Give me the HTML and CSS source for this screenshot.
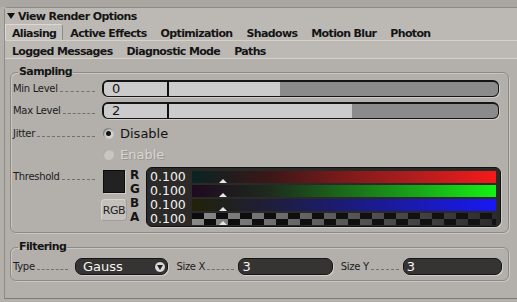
FILE: index.html
```html
<!DOCTYPE html>
<html lang="en">

<head>
    <meta charset="UTF-8">
    <title>View Render Options</title>
    <link rel="stylesheet" href="styles.css">
</head>

<body>
    <div class="top"></div>
    <div class="window">
        <div class="header">
            <svg class="arrow" width="8" height="6" viewBox="0 0 8 6"><path d="M0 0h8L4 6z" fill="#111"/></svg>
            <span>View Render Options</span>
        </div>
        <div class="tabs first">
            <span class="tab active">Aliasing</span>
            <span class="tab">Active Effects</span>
            <span class="tab">Optimization</span>
            <span class="tab">Shadows</span>
            <span class="tab">Motion Blur</span>
            <span class="tab">Photon</span>
        </div>
        <div class="tabs second">
            <span class="tab">Logged Messages</span>
            <span class="tab">Diagnostic Mode</span>
            <span class="tab">Paths</span>
        </div>

        <fieldset class="group sampling">
            <legend>Sampling</legend>
            <div class="row slider-row">
                <div class="lbl"><span>Min Level</span><i class="leader"></i></div>
                <div class="slider">
                    <div class="fill" style="width: 44.7%"></div>
                    <span class="val">0</span>
                    <b class="mark"></b>
                </div>
            </div>
            <div class="row slider-row">
                <div class="lbl"><span>Max Level</span><i class="leader"></i></div>
                <div class="slider">
                    <div class="fill" style="width: 63%"></div>
                    <span class="val">2</span>
                    <b class="mark"></b>
                </div>
            </div>
            <div class="row radio-row">
                <div class="lbl"><span>Jitter</span><i class="leader"></i></div>
                <label class="radio on"><i class="dot"></i>Disable</label>
            </div>
            <div class="row radio-row">
                <div class="lbl"></div>
                <label class="radio off"><i class="dot"></i>Enable</label>
            </div>
            <div class="row thresh-row">
                <div class="lbl"><span>Threshold</span><i class="leader"></i></div>
                <div class="thresh">
                    <div class="swatch-col">
                        <div class="swatch"></div>
                        <button class="rgb-btn">RGB</button>
                    </div>
                    <div class="letters">
                        <span>R</span><span>G</span><span>B</span><span>A</span>
                    </div>
                    <div class="color-panel">
                        <div class="chan"><span class="num">0.100</span><div class="bar red"><i class="tri"></i></div></div>
                        <div class="chan"><span class="num">0.100</span><div class="bar green"><i class="tri"></i></div></div>
                        <div class="chan"><span class="num">0.100</span><div class="bar blue"><i class="tri"></i></div></div>
                        <div class="chan"><span class="num">0.100</span><div class="bar checker"><i class="tri"></i></div></div>
                    </div>
                </div>
            </div>
        </fieldset>

        <fieldset class="group filtering">
            <legend>Filtering</legend>
            <div class="filter-row">
                <div class="lbl type-lbl"><span>Type</span><i class="leader"></i></div>
                <div class="dropdown">
                    <span>Gauss</span>
                    <svg width="12" height="12" viewBox="0 0 12 12"><circle cx="6" cy="6" r="5.5" fill="#d9d9d9" stroke="#222"/><path d="M3 4h6L6 9z" fill="#222"/></svg>
                </div>
                <div class="lbl size-lbl"><span>Size X</span><i class="leader"></i></div>
                <div class="field sx">3</div>
                <div class="lbl size-lbl"><span>Size Y</span><i class="leader"></i></div>
                <div class="field sy">3</div>
            </div>
        </fieldset>
    </div>
</body>

</html>
```

FILE: styles.css
```css
* {
    box-sizing: border-box;
}

body {
    margin: 0;
    width: 517px;
    height: 302px;
    overflow: hidden;
    background: #b3afab;
    font-family: "DejaVu Sans", sans-serif;
    color: #141414;
}

.top {
    height: 7px;
    background: #aaa6a2;
}

.window {
    margin-left: 4px;
    height: 292px;
    border-top: 1px solid #8e8a86;
    border-left: 1px solid #8e8a86;
    border-bottom: 1px solid #7c7874;
    border-top-left-radius: 4px;
    background: #b3afab;
}

.header {
    height: 16px;
    display: flex;
    align-items: center;
    gap: 3px;
    padding-left: 2px;
    background: #bcb9b5;
    font-weight: bold;
    font-size: 11px;
    letter-spacing: -0.6px;
}

.tabs {
    display: flex;
    align-items: flex-end;
    background: #bcb9b5;
    border-bottom: 1px solid #d4d1cd;
}

.tabs.first {
    height: 17px;
}

.tabs.second {
    height: 18px;
    align-items: center;
    padding-top: 5px;
}

.tab {
    padding: 0 7px;
    font-weight: bold;
    font-size: 11px;
    letter-spacing: -0.65px;
    line-height: 12px;
}

.tabs.first .tab {
    padding-top: 2px;
    line-height: 13px;
}

.tab.active {
    padding: 0 6px;
    background: #c5c2be;
    border: 1px solid #dcd9d5;
    border-right-color: #8e8a86;
    border-bottom: none;
    border-top-right-radius: 3px;
}

/* group frames */

.group {
    margin: 0 8px 0 5px;
    border: 1px solid #8e8a86;
    border-radius: 6px;
    box-shadow: inset 1px 1px 0 #c9c6c2, 1px 1px 0 #c9c6c2;
    min-width: 0;
}

.group legend {
    margin-left: 5px;
    padding: 0 1px;
    font-weight: bold;
    font-size: 11px;
    letter-spacing: -0.6px;
    line-height: 12px;
}

.sampling {
    margin-top: 7px;
    padding: 2px 9px 5px 2px;
}

.filtering {
    margin-top: 8px;
    padding: 5px 6px 5px 2px;
}

.row {
    display: flex;
    align-items: center;
}

.slider-row {
    height: 17px;
    margin-bottom: 5px;
}

.slider-row + .slider-row {
    margin-bottom: 4px;
}

.radio-row {
    height: 21px;
}

.thresh-row {
    height: 60px;
    margin-top: 2px;
    align-items: flex-start;
}

.lbl {
    width: 89px;
    flex: none;
    display: flex;
    align-items: baseline;
    font-size: 10px;
    letter-spacing: -0.3px;
    color: #1c1c1c;
}

.thresh-row .lbl {
    padding-top: 4px;
}

.leader {
    flex: 1;
    margin: 0 7px 0 2px;
    border-bottom: 1px dashed #736f6b;
}

/* sliders */

.slider {
    position: relative;
    flex: 1;
    height: 17px;
    border: 2px solid #151515;
    border-right-width: 1px;
    border-bottom-width: 1px;
    border-radius: 6px;
    background: #8b8b8b;
    overflow: hidden;
    box-shadow: 1px 1px 0 #cfccc8;
}

.fill {
    height: 100%;
    background: #cbcbcb;
}

.val {
    position: absolute;
    left: 8px;
    top: -1px;
    font-size: 13px;
    line-height: 16px;
}

.mark {
    position: absolute;
    left: 63px;
    top: 0;
    bottom: 0;
    width: 2px;
    background: #111;
}

/* radios */

.radio {
    display: flex;
    align-items: center;
    gap: 6px;
    margin-left: 1px;
    font-size: 13px;
}

.radio .dot {
    width: 11px;
    height: 11px;
    border-radius: 50%;
    background: radial-gradient(circle at 60% 60%, #e2e2e2, #a9a9a9);
    box-shadow: inset 1px 1px 1px #7a7a7a;
    display: flex;
    align-items: center;
    justify-content: center;
}

.radio.on .dot::after {
    content: "";
    width: 5px;
    height: 5px;
    border-radius: 50%;
    background: #141414;
}

.radio.off {
    color: #d8d5d1;
    text-shadow: 1px 1px 0 #9a9692;
}

.radio.off .dot {
    background: #c9c6c2;
    box-shadow: inset 1px 1px 1px #aaa6a2;
}

/* threshold */

.thresh {
    flex: 1;
    display: flex;
    height: 60px;
    margin-right: -2px;
}

.swatch-col {
    width: 24px;
    display: flex;
    flex-direction: column;
    align-items: center;
}

.swatch {
    width: 22px;
    height: 23px;
    margin-top: 3px;
    background: #222;
    border: 1px solid #0c0c0c;
    box-shadow: 1px 1px 0 #d2cfcb;
}

.rgb-btn {
    margin-top: 6px;
    width: 26px;
    height: 22px;
    padding: 0;
    font-family: "DejaVu Sans", sans-serif;
    font-size: 11px;
    letter-spacing: -0.4px;
    color: #222;
    background: #c3c0bc;
    border: 1px solid #a19d99;
    border-top-color: #d6d3cf;
    border-left-color: #d6d3cf;
    border-radius: 4px;
}

.letters {
    width: 20px;
    padding: 1px 0 0 4px;
    display: flex;
    flex-direction: column;
    font-weight: bold;
    font-size: 12px;
    line-height: 14px;
}

.color-panel {
    flex: 1;
    padding: 3px 4px 1px 3px;
    background: #2b2a29;
    border: 1px solid #101010;
    border-radius: 6px;
    box-shadow: 1px 1px 0 #cecbc7;
    display: flex;
    flex-direction: column;
    gap: 2px;
}

.chan {
    display: flex;
    height: 12px;
}

.num {
    width: 42px;
    flex: none;
    color: #f2f2f2;
    font-size: 12.5px;
    line-height: 12px;
}

.bar {
    position: relative;
    flex: 1;
}

.bar.red {
    background: linear-gradient(to right, #0a2323, #3a1717 25%, #7c1a1a 50%, #b51d1d 75%, #f51a1a);
}

.bar.green {
    background: linear-gradient(to right, #1e0a20, #1d2a1d 25%, #1a6a1a 50%, #18a818 75%, #14f214);
}

.bar.blue {
    background: linear-gradient(to right, #22220a, #1e1e3a 25%, #1b1b78 50%, #1a1ab5 75%, #1818f5);
}

.bar.checker {
    background:
        linear-gradient(to right, rgba(20, 20, 20, 0), rgba(20, 20, 20, 0.35) 40%, rgba(20, 20, 20, 0.8)),
        repeating-conic-gradient(#8a8a8a 0 25%, #0c0c0c 0 50%) 0 0 / 24px 12px;
}

.tri {
    position: absolute;
    left: 27px;
    bottom: 0;
    width: 0;
    height: 0;
    border-left: 4px solid transparent;
    border-right: 4px solid transparent;
    border-bottom: 4px solid #e6e6e6;
}

/* filtering row */

.filter-row {
    display: flex;
    align-items: center;
    height: 17px;
}

.type-lbl {
    width: 62px;
}

.size-lbl {
    width: 62px;
    margin-left: 8px;
}

.size-lbl .leader {
    margin-right: 4px;
}

.dropdown,
.field {
    height: 17px;
    background: #363432;
    border: 1px solid #161616;
    border-radius: 7px;
    box-shadow: 1px 1px 0 #d0cdc9;
    color: #f4f4f4;
    font-size: 13px;
    line-height: 15px;
}

.dropdown {
    width: 94px;
    display: flex;
    align-items: center;
    justify-content: space-between;
    padding: 0 1px 0 7px;
}

.field {
    padding-left: 3px;
}

.field.sx {
    width: 95px;
}

.field.sy {
    width: 100px;
}
```
